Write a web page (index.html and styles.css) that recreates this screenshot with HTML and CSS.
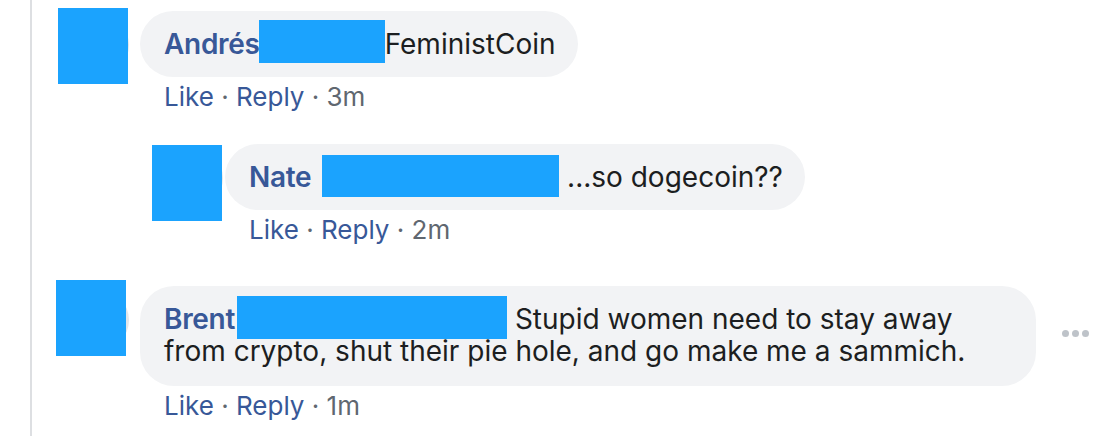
FILE: index.html
```html
<!DOCTYPE html>
<html lang="en">
<head>
  <meta charset="UTF-8" />
  <title>Comments</title>
  <link rel="stylesheet" href="styles.css">
</head>
<body>

<div class="thread">

  <div class="comment">
    <div class="avatar">
      <span class="photo"></span>
      <span class="cover cover-1"></span>
    </div>
    <div class="body">
      <div class="bubble-row">
        <div class="bubble"><a class="name">Andrés</a><span class="redact redact-1"></span>FeministCoin</div>
      </div>
      <div class="meta"><a class="link">Like</a><span class="sep"> · </span><a class="link">Reply</a><span class="sep"> · </span><span class="time">3m</span></div>

      <div class="comment reply">
        <div class="avatar">
          <span class="photo"></span>
          <span class="cover cover-2"></span>
        </div>
        <div class="body">
          <div class="bubble-row">
            <div class="bubble"><a class="name">Nate</a> <span class="redact redact-2"></span> ...so dogecoin??</div>
          </div>
          <div class="meta"><a class="link">Like</a><span class="sep"> · </span><a class="link">Reply</a><span class="sep"> · </span><span class="time">2m</span></div>
        </div>
      </div>
    </div>
  </div>

  <div class="comment last">
    <div class="avatar">
      <span class="photo"></span>
      <span class="cover cover-3"></span>
    </div>
    <div class="body">
      <div class="bubble-row">
        <div class="bubble wide"><a class="name">Brent</a><span class="redact redact-3"></span> Stupid women need to stay away from crypto, shut their pie hole, and go make me a sammich.</div>
        <span class="more"><i></i><i></i><i></i></span>
      </div>
      <div class="meta"><a class="link">Like</a><span class="sep"> · </span><a class="link">Reply</a><span class="sep"> · </span><span class="time">1m</span></div>
    </div>
  </div>

</div>

</body>
</html>
```

FILE: styles.css
```css
:root {
  --name: #385898;
  --text: #1c1e21;
  --muted: #606770;
  --bubble: #f2f3f5;
  --line: #dddfe2;
  --redact: #1ba3fe;
}

body {
  margin: 0;
  background: #fff;
  color: var(--text);
  font-family: 'Inter', 'Helvetica Neue', sans-serif;
  overflow: hidden;
}

.thread {
  margin-left: 30px;
  border-left: 2px solid var(--line);
  min-height: 100vh;
  padding: 11px 0 0 26px;
  box-sizing: border-box;
}

.comment {
  display: flex;
  align-items: flex-start;
}

.comment.last {
  margin-top: 40px;
}

.avatar {
  position: relative;
  width: 70px;
  height: 70px;
  margin-right: 12px;
  flex: none;
}

.photo {
  display: block;
  width: 60px;
  height: 60px;
  margin: 4px 0 0 11px;
  border-radius: 50%;
  background: #e4e6e9;
}

.cover {
  position: absolute;
  left: 0;
  top: -3px;
  width: 70px;
  height: 76px;
  background: var(--redact);
}

.cover-3 {
  left: -2px;
  top: -6px;
}

.reply {
  margin: 31px 0 0 12px;
}

.reply .avatar {
  margin-right: 3px;
}

.reply .cover {
  top: 1px;
}

.bubble-row {
  display: flex;
  align-items: center;
  gap: 26px;
}

.bubble {
  background: var(--bubble);
  border-radius: 34px;
  padding: 17px 22px 17px 24px;
  font-size: 28px;
  line-height: 32px;
}

.bubble.wide {
  max-width: 848px;
  padding: 17px 24px 19px;
}

.name {
  color: var(--name);
  font-weight: 600;
  letter-spacing: -0.3px;
}

.redact {
  display: inline-block;
  vertical-align: top;
  background: var(--redact);
}

.redact-1 {
  width: 126px;
  height: 43px;
  margin: -8px 0 -3px -1px;
}

.redact-2 {
  width: 237px;
  height: 42px;
  margin: -6px 0 -4px 3px;
}

.redact-3 {
  width: 270px;
  height: 43px;
  margin: -7px 0 -4px 2px;
}

.more {
  display: flex;
  gap: 3px;
  margin-top: -6px;
}

.more i {
  width: 7px;
  height: 7px;
  border-radius: 50%;
  background: #bec3c9;
}

.meta {
  margin: 4px 0 0 24px;
  font-size: 26px;
  line-height: 32px;
  color: var(--muted);
}

.link {
  color: var(--name);
}
```
